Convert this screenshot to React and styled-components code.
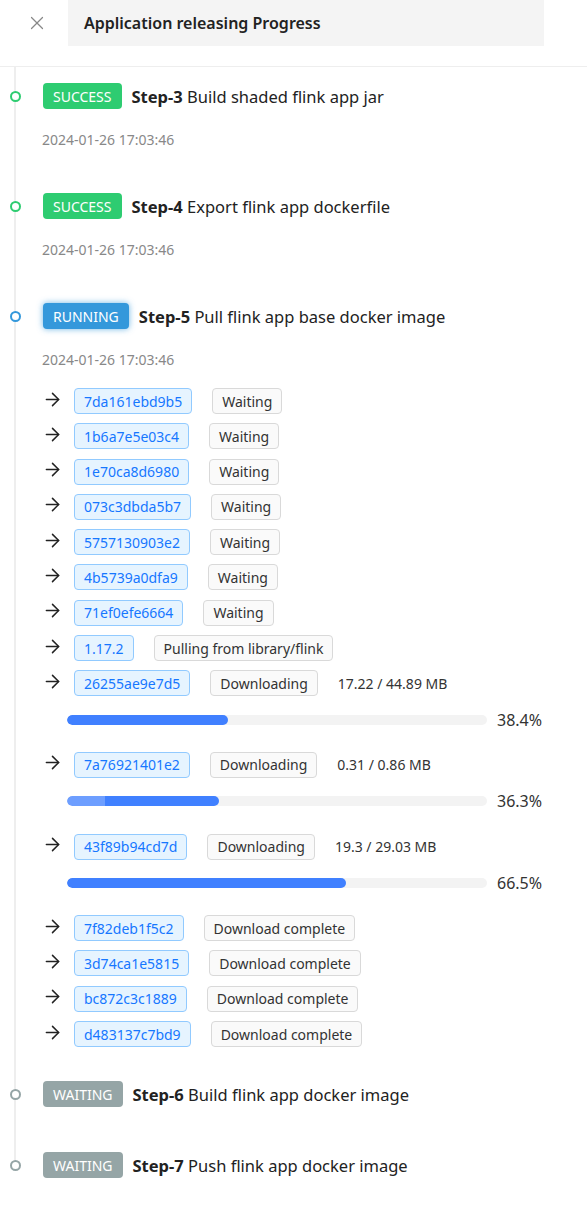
import styled, { createGlobalStyle } from 'styled-components'
import { ArrowRight, X } from 'lucide-react'

const GlobalStyle = createGlobalStyle`
  body {
    margin: 0;
    background: #fff;
    font-family: 'Noto Sans', 'Open Sans', sans-serif;
    color: #222;
  }
`

const Header = styled.div`
  display: flex;
  height: 66px;
  border-bottom: 1px solid #eee;
`

const CloseButton = styled.div`
  width: 68px;
  height: 46px;
  display: flex;
  align-items: center;
  justify-content: center;
  padding-left: 6px;
  box-sizing: border-box;
  color: #888;
`

const TitleBox = styled.div`
  width: 476px;
  height: 46px;
  background: #f4f4f4;
  display: flex;
  align-items: center;
  padding-left: 16px;
  box-sizing: border-box;
  font-size: 16px;
  font-weight: 600;
  color: #222;
`

const Timeline = styled.div`
  position: relative;
  padding-top: 16px;

  &::before {
    content: '';
    position: absolute;
    left: 14px;
    top: 0;
    bottom: 50px;
    width: 2px;
    background: #eee;
  }
`

const Item = styled.div`
  position: relative;
  padding-bottom: ${(props) => props.$pad || 42}px;
`

const Head = styled.div`
  display: flex;
  align-items: center;
  height: 26px;
`

const dotColors = {
  success: '#2ecc71',
  running: '#3498db',
  waiting: '#95a5a6',
}

const Dot = styled.span`
  width: 11px;
  height: 11px;
  box-sizing: border-box;
  border: 2px solid ${(props) => dotColors[props.$state]};
  border-radius: 50%;
  background: #fff;
  margin: 0 22px 0 10px;
  position: relative;
  z-index: 1;
`

const StateTag = styled.span`
  display: inline-flex;
  align-items: center;
  height: 26px;
  padding: 0 10px;
  border-radius: 4px;
  background: ${(props) => dotColors[props.$state]};
  color: #fff;
  font-size: 14px;
  box-shadow: ${(props) =>
    props.$state === 'running' ? '0 0 6px rgba(52, 152, 219, 0.7)' : 'none'};
`

const StepTitle = styled.div`
  margin-left: 10px;
  font-size: 16.5px;
  color: #222;

  b {
    font-weight: 700;
  }
`

const Body = styled.div`
  padding-left: 42px;
`

const Date = styled.div`
  margin-top: 20px;
  font-size: 14px;
  line-height: 22px;
  color: #888;
`

const PullList = styled.div`
  display: flex;
  flex-direction: column;
  gap: 9.3px;
  margin: 17px 0 -8px;
`

const PullRow = styled.div`
  display: flex;
  align-items: center;
  height: 26px;
  font-size: 14px;
`

const Arrow = styled(ArrowRight)`
  color: #222;
  margin: -4px 11px 0 0;
  flex-shrink: 0;
`

const Tag = styled.span`
  display: inline-flex;
  align-items: center;
  height: 26px;
  box-sizing: border-box;
  padding: 0 9px;
  border-radius: 4px;
  font-size: 14px;
  margin-right: 20px;
  border: 1px solid ${(props) => (props.$hash ? '#91caff' : '#d9d9d9')};
  background: ${(props) => (props.$hash ? '#e6f4ff' : '#fafafa')};
  color: ${(props) => (props.$hash ? '#1677ff' : '#333')};
`

const Size = styled.span`
  font-size: 14px;
  color: #333;
`

const Progress = styled.div`
  display: flex;
  align-items: center;
  height: 22px;
  margin: 3px 0 12px;
  padding-left: 25px;
`

const Track = styled.div`
  width: 420px;
  height: 10px;
  border-radius: 5px;
  background: #f3f3f3;
  overflow: hidden;
`

const Fill = styled.div`
  height: 100%;
  border-radius: 5px;
  background: ${(props) =>
    props.$glow
      ? 'linear-gradient(90deg, #6d9eff 0, #6d9eff 38px, #4080ff 38px)'
      : '#4080ff'};
`

const Percent = styled.span`
  margin-left: 10px;
  font-size: 16px;
  color: #333;
`

const layers = [
  { id: '7da161ebd9b5', status: 'Waiting' },
  { id: '1b6a7e5e03c4', status: 'Waiting' },
  { id: '1e70ca8d6980', status: 'Waiting' },
  { id: '073c3dbda5b7', status: 'Waiting' },
  { id: '5757130903e2', status: 'Waiting' },
  { id: '4b5739a0dfa9', status: 'Waiting' },
  { id: '71ef0efe6664', status: 'Waiting' },
  { id: '1.17.2', status: 'Pulling from library/flink' },
  { id: '26255ae9e7d5', status: 'Downloading', size: '17.22 / 44.89 MB', pct: 38.4 },
  { id: '7a76921401e2', status: 'Downloading', size: '0.31 / 0.86 MB', pct: 36.3, glow: true },
  { id: '43f89b94cd7d', status: 'Downloading', size: '19.3 / 29.03 MB', pct: 66.5 },
  { id: '7f82deb1f5c2', status: 'Download complete' },
  { id: '3d74ca1e5815', status: 'Download complete' },
  { id: 'bc872c3c1889', status: 'Download complete' },
  { id: 'd483137c7bd9', status: 'Download complete' },
]

const DATE = '2024-01-26 17:03:46'

function Step({ state, num, title, date, pad, children }) {
  return (
    <Item $pad={pad}>
      <Head>
        <Dot $state={state} />
        <StateTag $state={state}>{state.toUpperCase()}</StateTag>
        <StepTitle>
          <b>Step-{num}</b> {title}
        </StepTitle>
      </Head>
      <Body>
        {date && <Date>{date}</Date>}
        {children}
      </Body>
    </Item>
  )
}

export default function App() {
  return (
    <>
      <GlobalStyle />
      <Header>
        <CloseButton>
          <X size={22} strokeWidth={1.3} />
        </CloseButton>
        <TitleBox>Application releasing Progress</TitleBox>
      </Header>
      <Timeline>
        <Step state="success" num={3} title="Build shaded flink app jar" date={DATE} />
        <Step state="success" num={4} title="Export flink app dockerfile" date={DATE} />
        <Step state="running" num={5} title="Pull flink app base docker image" date={DATE}>
          <PullList>
            {layers.map((l) => (
              <>
                <PullRow key={l.id}>
                  <Arrow size={21} strokeWidth={1.7} />
                  <Tag $hash>{l.id}</Tag>
                  <Tag>{l.status}</Tag>
                  {l.size && <Size>{l.size}</Size>}
                </PullRow>
                {l.pct != null && (
                  <Progress key={l.id + '-p'}>
                    <Track>
                      <Fill $glow={l.glow} style={{ width: `${l.pct}%` }} />
                    </Track>
                    <Percent>{l.pct}%</Percent>
                  </Progress>
                )}
              </>
            ))}
          </PullList>
        </Step>
        <Step state="waiting" num={6} title="Build flink app docker image" pad={45} />
        <Step state="waiting" num={7} title="Push flink app docker image" />
      </Timeline>
    </>
  )
}
